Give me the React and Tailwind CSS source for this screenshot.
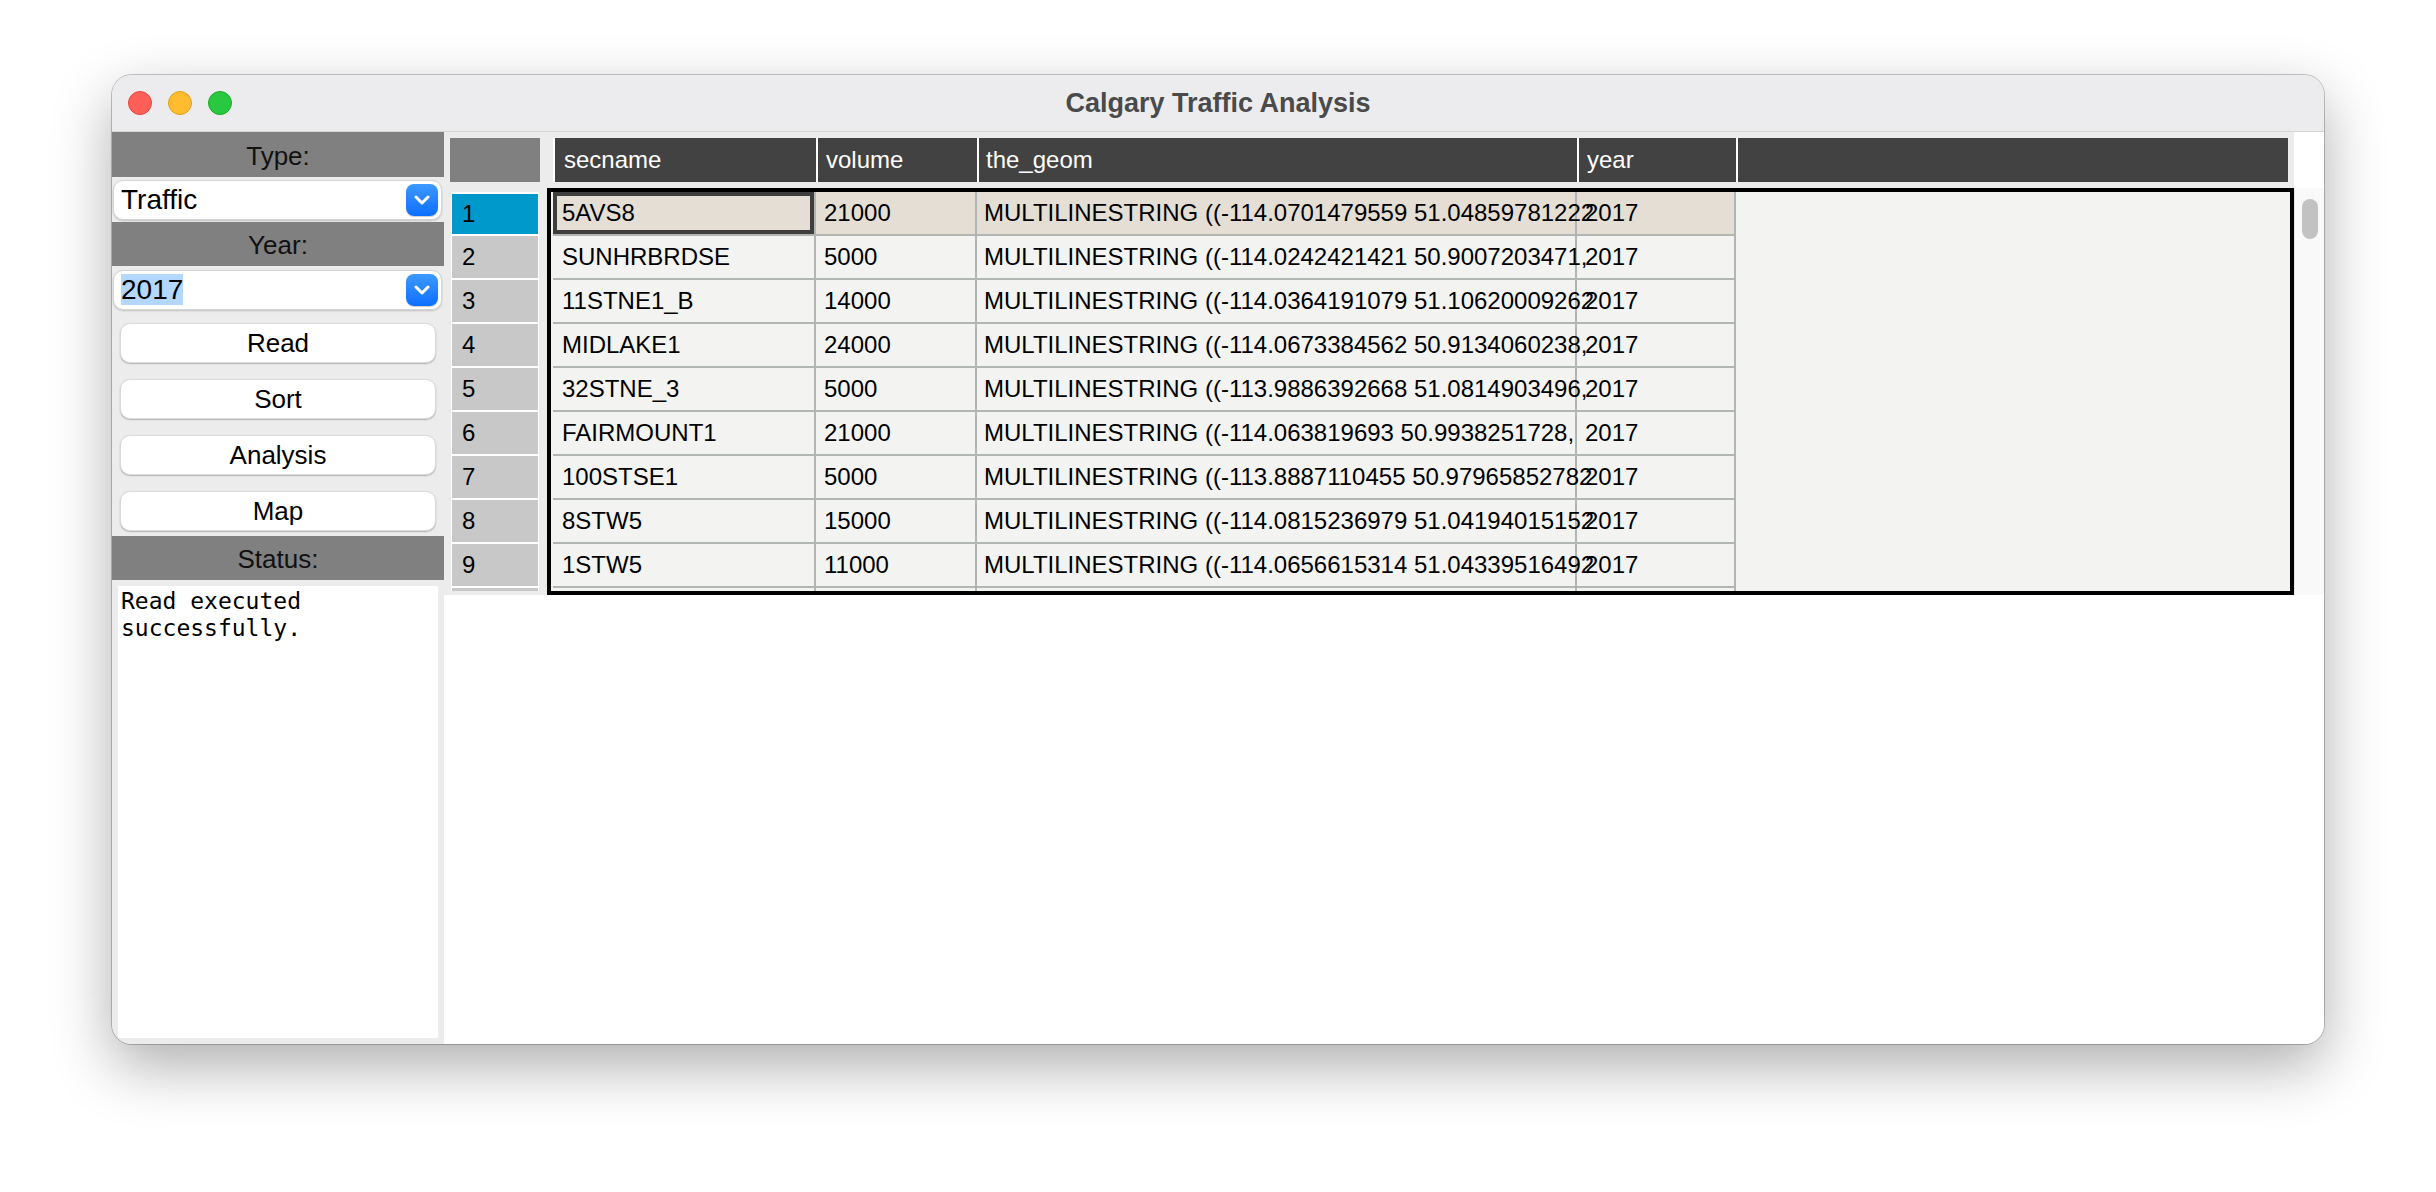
import React from "react"

const cols = [
  { label: 'secname', w: 'w-[263px]', pad: 'pl-[9px]' },
  { label: 'volume', w: 'w-[161px]', pad: 'pl-[8px]' },
  { label: 'the_geom', w: 'w-[600px]', pad: 'pl-[7px]' },
  { label: 'year', w: 'w-[159px]', pad: 'pl-[8px]' }
]

// geom strings are cut to 48 chars, like the table widget does, so the tail runs into the year column
const rows = [
  ['5AVS8', '21000', 'MULTILINESTRING ((-114.0701479559 51.04859781222', '2017'],
  ['SUNHRBRDSE', '5000', 'MULTILINESTRING ((-114.0242421421 50.9007203471,', '2017'],
  ['11STNE1_B', '14000', 'MULTILINESTRING ((-114.0364191079 51.10620009262', '2017'],
  ['MIDLAKE1', '24000', 'MULTILINESTRING ((-114.0673384562 50.9134060238,', '2017'],
  ['32STNE_3', '5000', 'MULTILINESTRING ((-113.9886392668 51.0814903496,', '2017'],
  ['FAIRMOUNT1', '21000', 'MULTILINESTRING ((-114.063819693 50.9938251728,', '2017'],
  ['100STSE1', '5000', 'MULTILINESTRING ((-113.8887110455 50.97965852782', '2017'],
  ['8STW5', '15000', 'MULTILINESTRING ((-114.0815236979 51.04194015152', '2017'],
  ['1STW5', '11000', 'MULTILINESTRING ((-114.0656615314 51.04339516492', '2017'],
  ['', '', '', '']
]

const sans = "font-['Liberation_Sans',Arial,sans-serif]"

function Chevron() {
  return (
    <div className="flex h-[32px] w-[32px] items-center justify-center rounded-[8px] bg-gradient-to-b from-[#3d98ff] to-[#0a6efe] shadow-[0_1px_1px_rgba(0,0,0,0.2)]">
      <svg width="16" height="10" viewBox="0 0 16 10" fill="none">
        <path d="M2 2 L8 8 L14 2" stroke="white" strokeWidth="3" strokeLinecap="round" strokeLinejoin="round" />
      </svg>
    </div>
  )
}

function Combo({ children }) {
  return (
    <div className="ml-[1px] mr-[2px] flex h-[40px] items-center justify-between rounded-[10px] border border-[#d4d4d4] bg-white pl-[7px] pr-[3px] shadow-[0_1px_2px_rgba(0,0,0,0.18)]">
      <span className="text-[28px] leading-[32px] text-black">{children}</span>
      <Chevron />
    </div>
  )
}

function PanelHeader({ children, className = "" }) {
  return (
    <div className={`flex h-[44px] items-center justify-center bg-[#808080] pt-[3px] text-[26px] text-[#111] ${className}`}>
      {children}
    </div>
  )
}

function Btn({ children, className = "" }) {
  return (
    <button className={`mx-[8px] h-[40px] rounded-[10px] border border-[#dadada] bg-white text-[26px] leading-[38px] text-black shadow-[0_1px_1.5px_rgba(0,0,0,0.25)] ${className}`}>
      {children}
    </button>
  )
}

export default function App() {
  return (
    <div className={`h-[1192px] w-[2436px] overflow-hidden bg-white pl-[112px] pt-[75px] ${sans}`}>
      <div className="flex h-[969px] w-[2212px] flex-col overflow-hidden rounded-[20px] bg-[#ececec] shadow-[0_0_0_1px_rgba(0,0,0,0.22),0_22px_60px_rgba(0,0,0,0.32)]">

        {/* title bar */}
        <div className="grid h-[57px] grid-cols-[1fr_auto_1fr] items-center border-b border-[#d3d3d3] bg-[#ececee]">
          <div className="flex gap-[16px] pl-[16px]">
            <span className="h-[24px] w-[24px] rounded-full border border-[#e2463f] bg-[#ff5f57]" />
            <span className="h-[24px] w-[24px] rounded-full border border-[#e1a116] bg-[#febc2e]" />
            <span className="h-[24px] w-[24px] rounded-full border border-[#1aab29] bg-[#28c840]" />
          </div>
          <div className="text-[27px] font-bold text-[#4a4a4a]">Calgary Traffic Analysis</div>
          <div />
        </div>

        <div className="flex flex-1">

          {/* LEFT PANEL */}
          <div className="flex w-[332px] flex-col bg-[#ececec]">
            <PanelHeader className="h-[45px]">Type:</PanelHeader>
            <div className="mt-[3px]"><Combo>Traffic</Combo></div>
            <PanelHeader className="mt-[2px]">Year:</PanelHeader>
            <div className="mt-[4px]">
              <Combo><span className="bg-[#b3d7ff]">2017</span></Combo>
            </div>
            <Btn className="mt-[13px]">Read</Btn>
            <Btn className="mt-[16px]">Sort</Btn>
            <Btn className="mt-[16px]">Analysis</Btn>
            <Btn className="mt-[16px]">Map</Btn>
            <PanelHeader className="mt-[5px]">Status:</PanelHeader>
            <div className="mx-[6px] mb-[6px] mt-[6px] flex-1 bg-white pl-[3px] pt-[2px] font-['DejaVu_Sans_Mono',monospace] text-[23px] leading-[27px] text-black">
              Read executed<br />successfully.
            </div>
          </div>

          {/* RIGHT PANEL */}
          <div className="flex flex-1 flex-col bg-white">
            <div className="flex h-[463px] bg-[#ececec]">
              <div className="flex flex-1 flex-col">
                {/* column headers */}
                <div className="mt-[6px] flex h-[44px] pl-[6px] pr-[6px]">
                  <div className="w-[90px] bg-[#808080]" />
                  <div className="ml-[13px] flex flex-1 border-l-2 border-white bg-[#424242] text-[24px] text-white">
                    {cols.map((c) => (
                      <div key={c.label} className={`${c.w} ${c.pad} flex shrink-0 items-center border-r-2 border-white`}>
                        {c.label}
                      </div>
                    ))}
                    <div className="flex-1" />
                  </div>
                </div>

                {/* rows */}
                <div className="mt-[6px] flex h-[407px] pl-[7px]">
                  <div className="mt-[4px] h-[399px] w-[88px] overflow-hidden bg-white px-[1px] text-[24px] text-black">
                    {rows.map((r, i) => (
                      <div
                        key={i}
                        className={`mb-[2px] flex h-[42px] items-center pl-[10px] ${i === 0 ? 'border-t-2 border-white bg-[#0099cb]' : 'bg-[#c8c8c8]'}`}
                      >
                        {i + 1}
                      </div>
                    ))}
                  </div>

                  <div className="ml-[8px] flex-1 overflow-hidden border-4 border-black bg-[#f3f3f1] pl-[2px] text-[24px] text-black">
                    {rows.map((r, i) => (
                      <div key={i} className="flex h-[44px]">
                        <div className={`flex ${i === 0 ? 'bg-[#e5ded5]' : ''}`}>
                          {cols.map((c, j) => (
                            <div
                              key={c.label}
                              className={`${c.w} ${c.pad} flex shrink-0 items-center whitespace-pre border-b-2 border-r-2 border-[#b2b6b2] ${i === 0 && j === 0 ? 'shadow-[inset_0_0_0_4px_#3e3e3e]' : ''}`}
                            >
                              {r[j]}
                            </div>
                          ))}
                        </div>
                        <div className="flex-1" />
                      </div>
                    ))}
                  </div>
                </div>
              </div>

              {/* scrollbar column */}
              <div className="flex w-[30px] flex-col">
                <div className="h-[56px] bg-white" />
                <div className="flex-1 border-l border-[#e4e4e4] bg-[#f9f9f9] pl-[7px] pt-[11px]">
                  <div className="h-[40px] w-[16px] rounded-full bg-[#c2c2c2]" />
                </div>
              </div>
            </div>
            <div className="flex-1 bg-white" />
          </div>
        </div>
      </div>
    </div>
  )
}
